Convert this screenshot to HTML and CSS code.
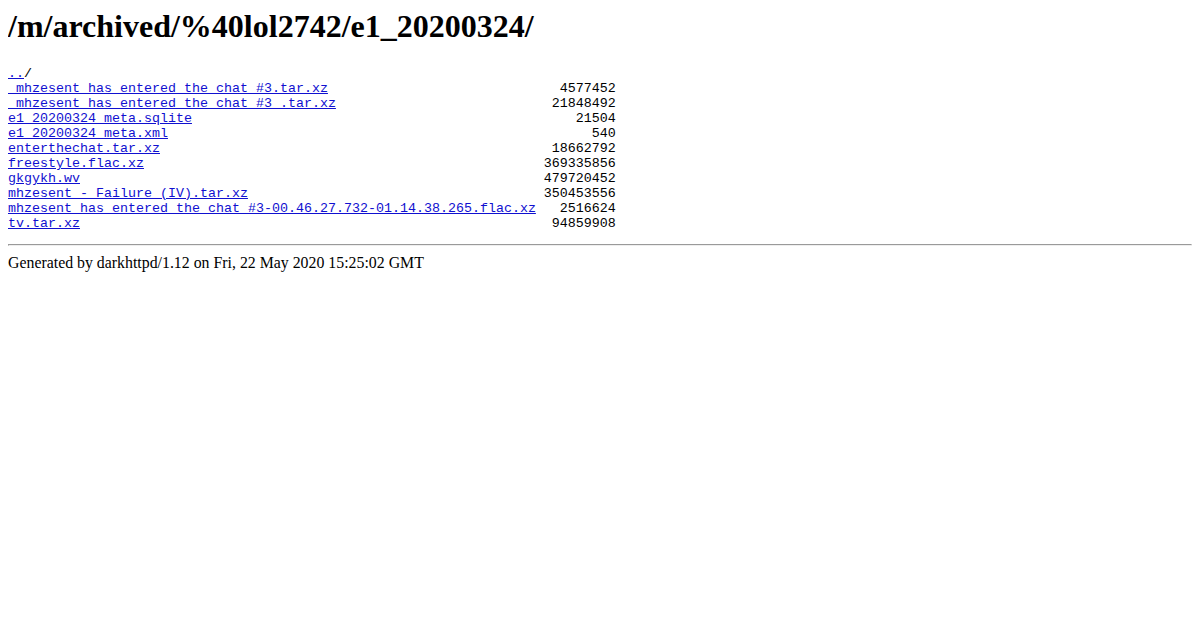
FILE: index.html
```html
<!DOCTYPE html>
<html>
<head>
  <meta charset="UTF-8">
  <title>/m/archived/%40lol2742/e1_20200324/</title>
  <link rel="stylesheet" href="styles.css">
</head>
<body>
<h1>/m/archived/%40lol2742/e1_20200324/</h1>
<div class="listing">
  <div class="parent"><a href="../">..</a>/</div>
  <a href="#">_mhzesent_has_entered_the_chat_#3.tar.xz</a><span class="size">4577452</span>
  <a href="#">_mhzesent_has_entered_the_chat_#3_.tar.xz</a><span class="size">21848492</span>
  <a href="#">e1_20200324_meta.sqlite</a><span class="size">21504</span>
  <a href="#">e1_20200324_meta.xml</a><span class="size">540</span>
  <a href="#">enterthechat.tar.xz</a><span class="size">18662792</span>
  <a href="#">freestyle.flac.xz</a><span class="size">369335856</span>
  <a href="#">gkgykh.wv</a><span class="size">479720452</span>
  <a href="#">mhzesent_-_Failure_(IV).tar.xz</a><span class="size">350453556</span>
  <a href="#">mhzesent_has_entered_the_chat_#3-00.46.27.732-01.14.38.265.flac.xz</a><span class="size">2516624</span>
  <a href="#">tv.tar.xz</a><span class="size">94859908</span>
</div>
<hr>
<span class="footer">Generated by darkhttpd/1.12 on Fri, 22 May 2020 15:25:02 GMT</span>
</body>
</html>
```
FILE: styles.css
```css
body {
  margin: 8px;
  font-family: "Liberation Serif", serif;
  font-size: 16px;
  color: #000;
  background: #fff;
}
h1 {
  font-size: 32px;
  font-weight: bold;
  margin: 0 0 21px;
}
.listing {
  display: grid;
  grid-template-columns: 66ch 10ch;
  width: max-content;
  margin: 13px 0;
  font-family: "Liberation Mono", monospace;
  font-size: 13.33px;
  line-height: 15px;
  white-space: pre;
}
.listing a { color: #1010d0; justify-self: start; }
.parent { grid-column: 1 / span 2; }
.size { text-align: right; }
hr { margin: 13px 0 8px; }
.footer { font-size: 15.85px; }
```
